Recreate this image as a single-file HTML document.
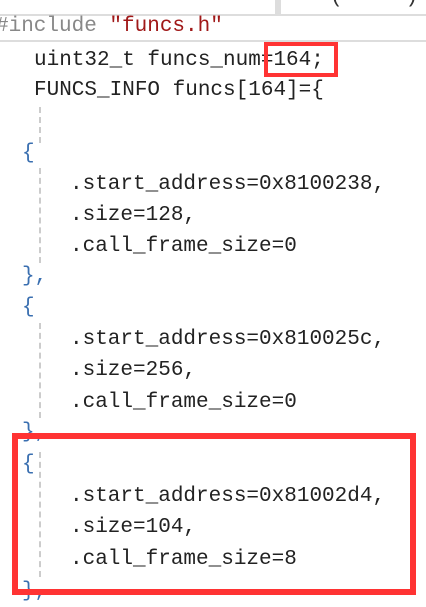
<!DOCTYPE html>
<html><head><style>
body{margin:0;width:426px;height:607px;background:#fff;overflow:hidden;position:relative;font-family:"Liberation Mono",monospace;font-size:21px;color:#222}
.l{position:absolute;white-space:pre;line-height:31px}
.b{color:#3a6fb0}
.g{position:absolute;left:39px;border-left:2px dashed #ccc;width:0}
.r{position:absolute;border:4px solid #f33}
</style></head><body>
<div style="position:absolute;left:0;top:0;width:426px;height:14px;border-bottom:2px solid #ddd"></div>
<div style="position:absolute;left:275px;top:0;width:6px;height:14px;background:#ddd"></div>
<div class="l" style="left:330px;top:-18px;color:#333">(     )</div>
<div style="position:absolute;left:0;top:40px;width:426px;height:2px;background:#ddd"></div>
<div class="l" style="left:-4px;top:11px;color:#888">#include <span style="color:#a01818">"funcs.h"</span></div>
<div class="l" style="left:34px;top:45px">uint32_t funcs_num=164;</div>
<div class="l" style="left:34px;top:75px">FUNCS_INFO funcs[164]={</div>
<div class="g" style="top:107px;height:36px"></div>
<div class="l b" style="left:22px;top:138px">{</div>
<div class="g" style="top:168px;height:95px"></div>
<div class="l" style="left:70px;top:169px">.start_address=0x8100238,</div>
<div class="l" style="left:70px;top:200px">.size=128,</div>
<div class="l" style="left:70px;top:231px">.call_frame_size=0</div>
<div class="l b" style="left:22px;top:261px">},</div>
<div class="l b" style="left:22px;top:292px">{</div>
<div class="g" style="top:323px;height:95px"></div>
<div class="l" style="left:70px;top:324px">.start_address=0x810025c,</div>
<div class="l" style="left:70px;top:355px">.size=256,</div>
<div class="l" style="left:70px;top:387px">.call_frame_size=0</div>
<div class="l b" style="left:22px;top:417px">},</div>
<div class="l b" style="left:22px;top:449px">{</div>
<div class="g" style="top:452px;height:125px"></div>
<div class="l" style="left:70px;top:481px">.start_address=0x81002d4,</div>
<div class="l" style="left:70px;top:512px">.size=104,</div>
<div class="l" style="left:70px;top:544px">.call_frame_size=8</div>
<div class="l b" style="left:22px;top:576px">},</div>
<div class="r" style="left:264px;top:42px;width:66px;height:27px"></div>
<div class="r" style="left:12px;top:433px;width:392px;height:150px;border-width:6px"></div>
</body></html>
